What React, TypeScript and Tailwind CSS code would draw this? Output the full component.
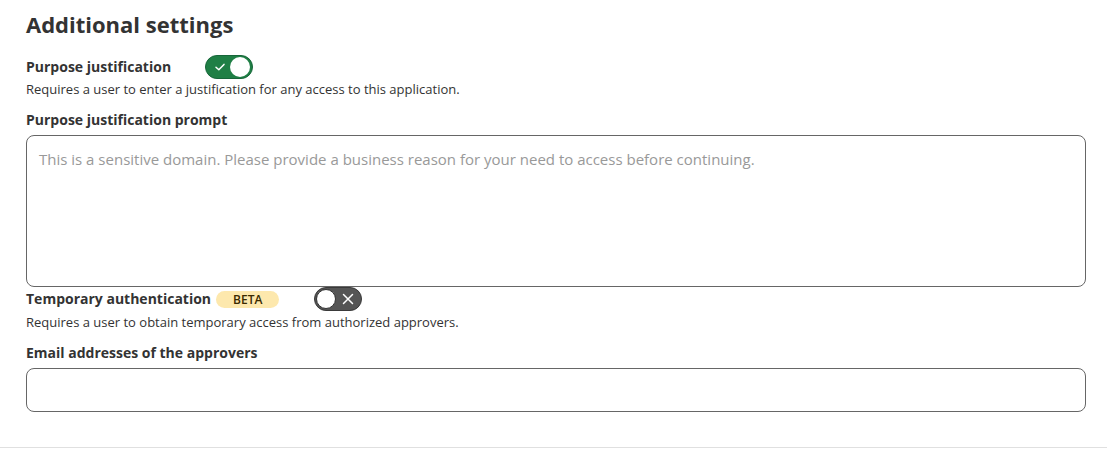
import React, { useState } from "react";

function Toggle({ on, onChange }: { on: boolean; onChange: () => void }) {
  return on ? (
    <button
      onClick={onChange}
      className="relative flex h-[24px] w-[48px] items-center rounded-full border border-[#17663a] bg-[#1f7f45] px-[2px]"
    >
      <svg width="14" height="14" viewBox="0 0 14 14" className="ml-[5px]">
        <path d="M3 7.3 L5.8 9.8 L11 4.4" fill="none" stroke="white" strokeWidth="1.5" strokeLinecap="round" strokeLinejoin="round" />
      </svg>
      <span className="ml-auto h-[20px] w-[20px] rounded-full bg-white" />
    </button>
  ) : (
    <button
      onClick={onChange}
      className="relative flex h-[24px] w-[48px] items-center rounded-full border border-[#3a3a3a] bg-[#555555] px-[1px]"
    >
      <span className="h-[20px] w-[20px] rounded-full border border-[#333] bg-white" />
      <svg width="14" height="14" viewBox="0 0 14 14" className="ml-[5px]">
        <path d="M2.5 2.5 L11.5 11.5 M11.5 2.5 L2.5 11.5" fill="none" stroke="white" strokeWidth="1.5" strokeLinecap="round" />
      </svg>
    </button>
  );
}

export default function App() {
  const [pj, setPj] = useState(true);
  const [ta, setTa] = useState(false);
  return (
    <div
      className="h-[449px] w-[1107px] bg-white text-[#333]"
      style={{ fontFamily: '"Open Sans", "Noto Sans", sans-serif' }}
    >
      <div className="flex h-[448px] flex-col border-b border-[#e0e0e0] pl-[26px] pr-[21px] pt-[10px]">
        <h2 className="text-[22px] font-bold leading-[28px] text-[#333]">Additional settings</h2>

        <div className="mt-[17px] flex items-center">
          <span className="text-[14px] font-bold leading-[20px]">Purpose justification</span>
          <span className="ml-[34px]">
            <Toggle on={pj} onChange={() => setPj(!pj)} />
          </span>
        </div>
        <p className="mt-[1px] text-[13px] leading-[18px]">
          Requires a user to enter a justification for any access to this application.
        </p>

        <label className="mt-[12px] text-[14px] font-bold leading-[20px]">Purpose justification prompt</label>
        <textarea
          className="mt-[5px] h-[152px] w-full resize-none rounded-[8px] border border-[#666] px-[12px] py-[12px] text-[15px] leading-[22px] text-[#333] outline-none placeholder:text-[#999]"
          placeholder="This is a sensitive domain. Please provide a business reason for your need to access before continuing."
        />

        <div className="flex items-center">
          <span className="text-[14px] font-bold leading-[20px]">Temporary authentication</span>
          <span className="ml-[5px] rounded-full bg-[#fde8ad] px-[17px] text-[12px] font-semibold leading-[17px] text-[#3a2a00]">
            BETA
          </span>
          <span className="ml-[35px]">
            <Toggle on={ta} onChange={() => setTa(!ta)} />
          </span>
        </div>
        <p className="mt-[2px] text-[13px] leading-[18px]">
          Requires a user to obtain temporary access from authorized approvers.
        </p>

        <label className="mt-[12px] text-[14px] font-bold leading-[20px]">Email addresses of the approvers</label>
        <input className="mt-[5px] h-[44px] w-full rounded-[8px] border border-[#666] px-[12px] text-[15px] outline-none" />
      </div>
    </div>
  );
}
